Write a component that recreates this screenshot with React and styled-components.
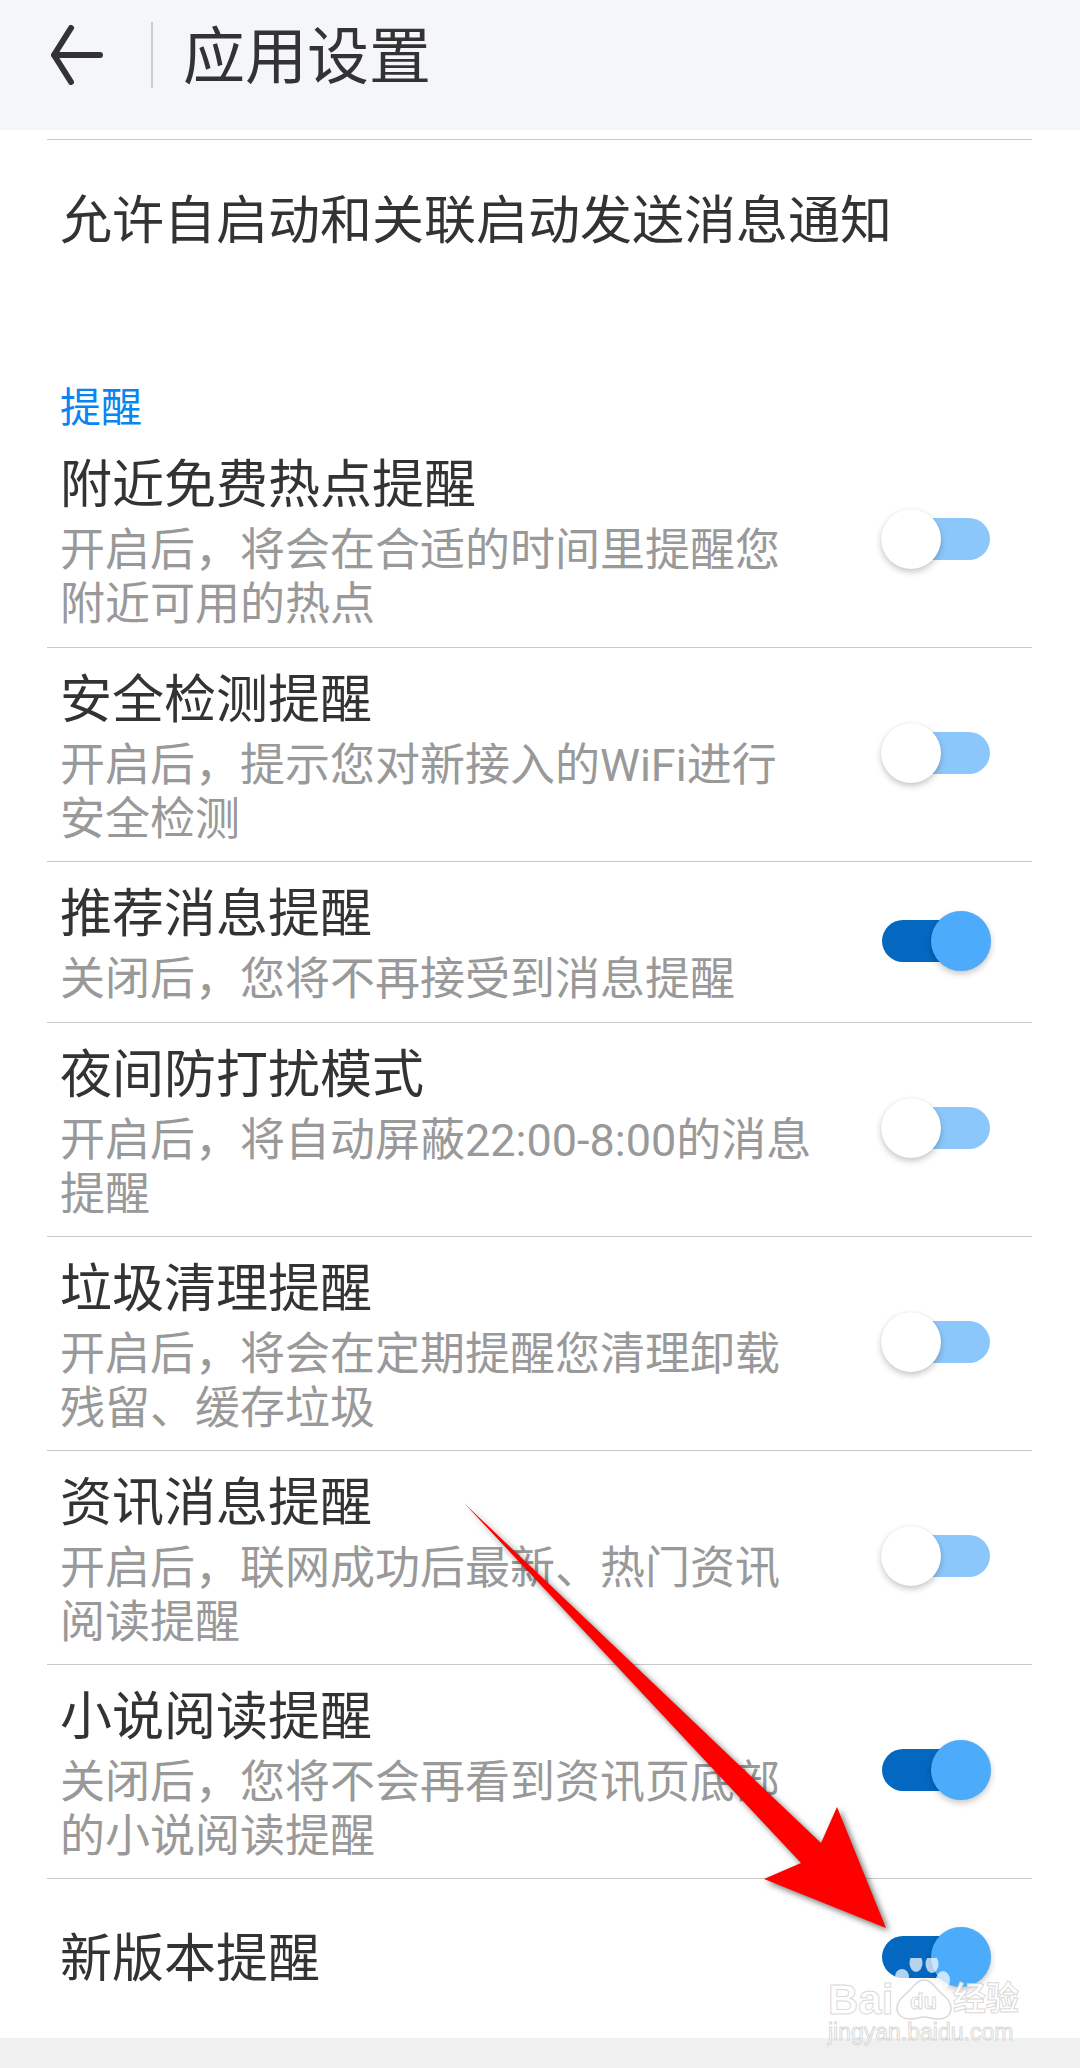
import React from "react";
import styled, { createGlobalStyle } from "styled-components";

const Global = createGlobalStyle`
  html, body { margin: 0; padding: 0; background: #fff; }
  body { font-family: Roboto, "Noto Sans CJK SC", sans-serif; }
`;

const Page = styled.div`
  position: relative;
  width: 1080px;
  height: 2068px;
  overflow: hidden;
  background: #fff;
  display: flex;
  flex-direction: column;
`;

const Header = styled.header`
  flex: none;
  height: 130px;
  box-sizing: border-box;
  padding: 0 0 20px 50px;
  background: #f5f6fa;
  display: flex;
  align-items: center;
`;

const BackIcon = styled.svg`
  width: 56px;
  height: 60px;
  flex: none;
`;

const HeaderRule = styled.div`
  width: 2px;
  height: 66px;
  margin-left: 45px;
  background: #cccccc;
`;

const HeaderTitle = styled.h1`
  margin: 0 0 0 30px;
  padding-top: 6px;
  font-size: 62px;
  line-height: 70px;
  font-weight: 400;
  color: #333;
`;

const Body = styled.main`
  flex: none;
  height: 1908px;
  box-sizing: border-box;
  padding: 9px 48px 0 47px;
  display: flex;
  flex-direction: column;
`;

const TopRow = styled.div`
  flex: none;
  box-sizing: border-box;
  height: 130px;
  padding: 47px 0 0 13px;
  border-top: 1px solid #c8c8c8;
  font-size: 52px;
  line-height: 70px;
  color: #333;
`;

const SectionLabel = styled.div`
  flex: none;
  height: 53px;
  padding: 3px 0 0 13px;
  margin-top: 108px;
  font-size: 41px;
  line-height: 56px;
  color: #0a84f0;
`;

const Row = styled.div`
  flex: none;
  box-sizing: border-box;
  height: ${(p) => p.$h}px;
  padding-left: 13px;
  border-top: ${(p) => (p.$first ? "none" : "1px solid #c8c8c8")};
  display: flex;
  align-items: center;
`;

const RowText = styled.div`
  flex: 1;
  min-width: 0;
  padding-top: ${(p) => (p.$plain ? 2 : 6)}px;
`;

const RowTitle = styled.div`
  font-size: 52px;
  line-height: 64px;
  color: #333;
`;

const RowDesc = styled.div`
  margin-top: 6px;
  font-size: 45px;
  line-height: 54px;
  color: #999;
`;

const Toggle = styled.div`
  position: relative;
  flex: none;
  width: 110px;
  height: 60px;
  margin: 0 41px 3px 0;
`;

const Track = styled.div`
  position: absolute;
  left: 1px;
  top: 9px;
  width: 108px;
  height: 42px;
  border-radius: 21px;
  background: ${(p) => (p.$on ? "#0468c0" : "#8cc7fb")};
`;

const Thumb = styled.div`
  position: absolute;
  top: 0;
  left: ${(p) => (p.$on ? 50 : 0)}px;
  width: 60px;
  height: 60px;
  border-radius: 50%;
  background: ${(p) => (p.$on ? "#4dabfb" : "#fff")};
  box-shadow: 0 3px 6px rgba(0, 0, 0, 0.22), 0 0 1px rgba(0, 0, 0, 0.12);
`;

const Footer = styled.div`
  flex: none;
  height: 30px;
  background: #f0f0f0;
`;

const ArrowSvg = styled.svg`
  position: absolute;
  left: 0;
  top: 0;
  width: 1080px;
  height: 2068px;
  filter: drop-shadow(3px 3px 3px rgba(0, 0, 0, 0.55));
  pointer-events: none;
`;

const Watermark = styled.div`
  position: absolute;
  left: 826px;
  top: 1958px;
  width: 200px;
  height: 92px;
  pointer-events: none;
`;

const PawSvg = styled.svg`
  position: absolute;
  left: 0;
  top: 0;
  width: 200px;
  height: 92px;
`;

const MarkText = styled.span`
  position: absolute;
  left: ${(p) => p.$x}px;
  top: ${(p) => p.$y}px;
  font-family: ${(p) => p.$font || '"Liberation Sans", sans-serif'};
  font-size: ${(p) => p.$size}px;
  line-height: 1;
  font-weight: ${(p) => p.$weight || 700};
  white-space: nowrap;
  color: rgba(255, 255, 255, 0.85);
  -webkit-text-stroke: 1px rgba(200, 200, 200, 0.7);
`;

const rows = [
  { t: "附近免费热点提醒", d: ["开启后，将会在合适的时间里提醒您", "附近可用的热点"], h: 214, first: true },
  { t: "安全检测提醒", d: ["开启后，提示您对新接入的WiFi进行", "安全检测"], h: 214 },
  { t: "推荐消息提醒", d: ["关闭后，您将不再接受到消息提醒"], h: 161, on: true },
  { t: "夜间防打扰模式", d: ["开启后，将自动屏蔽22:00-8:00的消息", "提醒"], h: 214 },
  { t: "垃圾清理提醒", d: ["开启后，将会在定期提醒您清理卸载", "残留、缓存垃圾"], h: 214 },
  { t: "资讯消息提醒", d: ["开启后，联网成功后最新、热门资讯", "阅读提醒"], h: 214 },
  { t: "小说阅读提醒", d: ["关闭后，您将不会再看到资讯页底部", "的小说阅读提醒"], h: 214, on: true },
  { t: "新版本提醒", d: [], h: 160, on: true },
];

export default function App() {
  return (
    <Page>
      <Global />
      <Header>
        <BackIcon viewBox="0 0 56 60">
          <path
            d="M50 30H4M21 3 4 30l17 27"
            fill="none"
            stroke="#333"
            strokeWidth="6"
            strokeLinecap="round"
            strokeLinejoin="round"
          />
        </BackIcon>
        <HeaderRule />
        <HeaderTitle>应用设置</HeaderTitle>
      </Header>
      <Body>
        <TopRow>允许自启动和关联启动发送消息通知</TopRow>
        <SectionLabel>提醒</SectionLabel>
        {rows.map((r) => (
          <Row key={r.t} $h={r.h} $first={r.first}>
            <RowText $plain={r.d.length === 0}>
              <RowTitle>{r.t}</RowTitle>
              {r.d.length > 0 && (
                <RowDesc>
                  {r.d.map((line, i) => (
                    <div key={i}>{line}</div>
                  ))}
                </RowDesc>
              )}
            </RowText>
            <Toggle>
              <Track $on={r.on} />
              <Thumb $on={r.on} />
            </Toggle>
          </Row>
        ))}
      </Body>
      <Footer />
      <ArrowSvg viewBox="0 0 1080 2068">
        <polygon
          points="464,1503 821,1843 837,1807 886,1928 764,1879 801,1863"
          fill="#ff0000"
        />
      </ArrowSvg>
      <Watermark>
        <PawSvg viewBox="0 0 200 92">
          <g fill="rgba(255,255,255,0.7)">
            <ellipse cx="76" cy="19" rx="7" ry="8" />
            <ellipse cx="90" cy="5" rx="6.5" ry="9" />
            <ellipse cx="106" cy="6" rx="6.5" ry="9" />
            <ellipse cx="117" cy="22" rx="7" ry="9" />
          </g>
          <path
            d="M98 22c-8 0-11 8-17 13-6 5-10 9-10 15 0 8 7 11 13 11 6 0 9-2 14-2s8 2 14 2c7 0 13-3 13-11 0-6-4-10-10-15-6-5-9-13-17-13Z"
            fill="rgba(255,255,255,0.55)"
            stroke="rgba(200,200,200,0.7)"
            strokeWidth="1.5"
          />
        </PawSvg>
        <MarkText $x={2} $y={21} $size={42}>Bai</MarkText>
        <MarkText $x={84} $y={33} $size={22}>du</MarkText>
        <MarkText $x={127} $y={22} $size={33} $font='"Noto Sans CJK SC", sans-serif'>经验</MarkText>
        <MarkText $x={2} $y={63} $size={23} $weight={400}>jingyan.baidu.com</MarkText>
      </Watermark>
    </Page>
  );
}
